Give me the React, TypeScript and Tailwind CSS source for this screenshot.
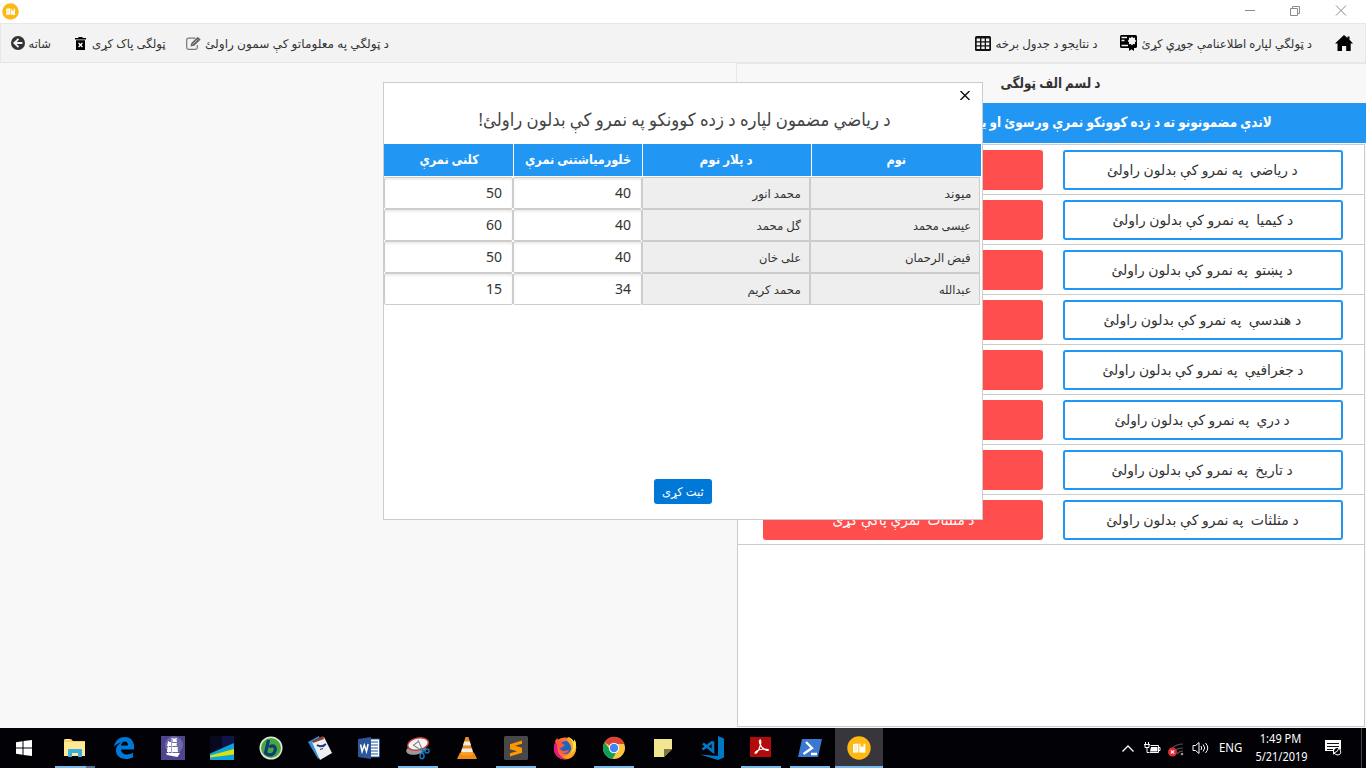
import React, { useLayoutEffect, useRef, useState } from "react";

/* Right-to-left line of text, condensed or widened to the given width. */
function Line({ text, w, className = "" }: { text: string; w: number; className?: string }) {
  const ref = useRef<HTMLSpanElement>(null);
  const [scale, setScale] = useState(1);
  useLayoutEffect(() => {
    if (ref.current) setScale(w / ref.current.offsetWidth);
  }, [w, text]);
  return (
    <span className="inline-flex shrink-0 justify-center" style={{ width: w }}>
      <span
        ref={ref}
        dir="rtl"
        className={"inline-block shrink-0 whitespace-pre " + className}
        style={{ transform: `scaleX(${scale})` }}
      >
        {text}
      </span>
    </span>
  );
}

const subjects: [string, number][] = [
  ["د ریاضي  په نمرو کې بدلون راولئ", 191],
  ["د کیمیا  په نمرو کې بدلون راولئ", 181],
  ["د پښتو  په نمرو کې بدلون راولئ", 181],
  ["د هندسې  په نمرو کې بدلون راولئ", 198],
  ["د جغرافیې  په نمرو کې بدلون راولئ", 201],
  ["د دري  په نمرو کې بدلون راولئ", 175],
  ["د تاریخ  په نمرو کې بدلون راولئ", 181],
  ["د مثلثات  په نمرو کې بدلون راولئ", 192],
];

const students: [string, number, string, number, number, number][] = [
  ["میوند", 27, "محمد انور", 48, 40, 50],
  ["عیسی محمد", 58, "گل محمد", 44, 40, 60],
  ["فیض الرحمان", 66, "علی خان", 42, 40, 50],
  ["عبدالله", 32, "محمد کریم", 53, 34, 15],
];

function AppLogo({ size }: { size: number }) {
  return (
    <svg width={size} height={size} viewBox="0 0 24 24">
      <circle cx="12" cy="12" r="11.7" fill="#fdb813" />
      <path d="M6 8 L11.400 7.400 V16.400 L6 16.800Z M12.200 8 L13.500 7.400 V11.500 L15 10 L16.500 11.500 V7.400 L18.300 8 V16.800 L12.200 16.400Z" fill="#fff" />
      <path d="M7.300 10h2.700M7.300 12h2.700M7.300 14h2.700" stroke="#fdb813" strokeWidth=".5" />
    </svg>
  );
}

function TitleBar() {
  return (
    <div className="flex h-[23px] items-center justify-between bg-white pl-[2px] pr-[19px]">
      <AppLogo size={17} />
      <svg width="103" height="13" viewBox="0 0 103 13" fill="none" stroke="#8a8a8a" strokeWidth="1">
        <path d="M1 5.500h10M46.500 3.500h7v7h-7zM48.500 3.500v-2h7v7h-2M92 .5l10 10M102 .5l-10 10" />
      </svg>
    </div>
  );
}

function Toolbar() {
  return (
    <div className="flex h-10 items-center justify-between border border-[#e7e7e7] bg-[#f3f3f3] pl-[10px] pr-[12px] text-[12px] text-[#333]">
      <div className="flex items-center">
        <svg width="14" height="14" viewBox="0 0 14 14">
          <circle cx="7" cy="7" r="7" fill="#333" />
          <path d="M7.500 2.800L3.300 7l4.200 4.200M3.600 7h7.800" fill="none" stroke="#f3f3f3" strokeWidth="1.900" />
        </svg>
        <span className="ml-[4px] flex pt-[2px]"><Line text="شاته" w={22} /></span>
        <svg className="ml-[24px]" width="11" height="13" viewBox="0 0 11 13">
          <path d="M0 1h3l.8-1h3.400L8 1h3v1.500H0zM1 3.300h9V13H1z" fill="#000" />
          <path d="M3.600 6l3.800 4M7.400 6l-3.800 4" stroke="#fff" strokeWidth="1.300" />
        </svg>
        <span className="ml-[6px] flex pt-[2px]"><Line text="ټولگی پاک کړی" w={74} /></span>
        <svg className="ml-[20px]" width="15" height="13" viewBox="0 0 15 13" fill="none" stroke="#777" strokeWidth="1.200">
          <path d="M9.500 1.200H2.500Q.7 1.200 .7 3v7.500q0 1.800 1.800 1.800H9.500q1.800 0 1.800-1.800V8" />
          <path d="M4.500 9.500l.8-3.500L11.700-.2l3 2.800L8.200 8.800z" fill="#666" stroke="none" />
          <path d="M6.500 7.500l5-5" stroke="#eee" strokeWidth=".6" />
        </svg>
        <span className="ml-[4px] flex pt-[2px]"><Line text="د ټولگي په معلوماتو کې سمون راولئ" w={184} /></span>
      </div>
      <div className="flex items-center">
        <svg width="16" height="15" viewBox="0 0 16 15">
          <rect width="16" height="15" rx="1.500" fill="#111" />
          <path d="M1.700 2.500h3.300v2.700H1.700zM6.400 2.500h3.300v2.700H6.400zM11 2.500h3.300v2.700H11zM1.700 6.500h3.300v2.700H1.700zM6.400 6.500h3.300v2.700H6.400zM11 6.500h3.300v2.700H11zM1.700 10.400h3.300v2.700H1.700zM6.400 10.400h3.300v2.700H6.400zM11 10.400h3.300v2.700H11z" fill="#f3f3f3" />
        </svg>
        <span className="ml-[5px] flex pt-[2px]"><Line text="د نتایجو د جدول برخه" w={102} /></span>
        <svg className="ml-[22px]" width="17" height="16" viewBox="0 0 17 16">
          <path d="M1.500 0h14Q17 0 17 1.500v10Q17 13 15.500 13H14v3l-2.500-1.800L9 16v-3H1.500Q0 13 0 11.500v-10Q0 0 1.500 0z" fill="#000" />
          <path d="M1.500 2.500h5.500M1.500 5.500h3M1.500 10.500H8" stroke="#f3f3f3" strokeWidth="1.300" />
          <path d="M12 1.600l1.200 1.300 1.900-.4-.2 2L16.300 6l-1.400 1.300.2 2-1.900-.3L12 10.400l-1.300-1.400-1.800.3.100-2L7.700 6 9 4.500l-.1-2 1.800.4z" fill="#f3f3f3" />
        </svg>
        <span className="ml-[5px] flex pt-[2px]"><Line text="د ټولگي لپاره اطلاعنامې جوړې کړئ" w={170} /></span>
        <svg className="ml-[23px]" width="18" height="16" viewBox="0 0 18 16">
          <path d="M9 0l3.500 3V1.500h2v3.200L18 8.500h-2.300V16h-4.500v-5H7v5H2.500V8.500H0z" fill="#000" />
        </svg>
      </div>
    </div>
  );
}

function SubjectPanel() {
  return (
    <div className="flex h-full w-[630px] flex-col border-t border-[#e7e7e7]">
      <div className="flex h-[39px] shrink-0 items-center justify-center border-l border-[#e7e7e7] bg-[#f8f8f8] pb-[2px] pr-[2px] text-[14px] font-bold text-[#333]">
        <Line text="د لسم الف ټولگی" w={100} />
      </div>
      <div className="ml-px flex h-10 shrink-0 items-center justify-end bg-[#2196f3] pb-[3px] pr-[94px] text-[14px] font-bold text-white">
        <Line text="لاندې مضمونونو ته د زده کوونکو نمرې ورسوئ او یا هم په نمرو کې بدلون راولئ" w={457} />
      </div>
      <div className="ml-px mr-px mt-px flex h-[583px] flex-col border border-[#ccc] bg-white">
        {subjects.map(([s, w]) => (
          <div key={s} className="flex h-[50px] shrink-0 items-center justify-between border-b border-[#ccc] pl-[25px] pr-[21px]">
            <div className="flex h-10 w-[280px] items-center justify-center rounded-[3px] bg-[#ff4e4e] text-[14px] text-white">
              <Line text={s.replace("په نمرو کې بدلون راولئ", "نمرې پاکې کړئ")} w={w - 50} />
            </div>
            <div className="flex h-10 w-[280px] items-center justify-center rounded-[3px] border-2 border-[#2196f3] pr-px text-[14px] text-[#333]">
              <Line text={s} w={w} />
            </div>
          </div>
        ))}
      </div>
    </div>
  );
}

function ScoreDialog() {
  return (
    <div className="absolute left-[383px] top-[82px] flex h-[438px] w-[600px] flex-col border border-[#ccc] bg-white text-[#333]">
      <div className="flex h-[24px] shrink-0 items-center justify-end pr-[12px]">
        <svg width="10" height="9" viewBox="0 0 10 9" stroke="#111" strokeWidth="1.400"><path d="M.5 0l9 9M9.500 0l-9 9" /></svg>
      </div>
      <div className="flex h-[37px] shrink-0 items-start justify-center pl-[3px] text-[18px] leading-[24px] text-[#444]">
        <Line text="د ریاضي مضمون لپاره د زده کوونکو په نمرو کې بدلون راولئ!" w={412} />
      </div>
      <div className="flex h-[33px] shrink-0 gap-px pb-px pr-px text-[13px] font-bold text-white [&>div]:flex [&>div]:items-center [&>div]:justify-center [&>div]:bg-[#2196f3]">
        <div className="w-[129px] pl-px"><Line text="کلنی نمرې" w={59} /></div>
        <div className="w-[128px]"><Line text="څلورمیاشتنی نمرې" w={106} /></div>
        <div className="w-[168px] pr-[2px]"><Line text="د پلار نوم" w={53} /></div>
        <div className="flex-1"><Line text="نوم" w={20} /></div>
      </div>
      {students.map(([name, nw, father, fw, mid, year]) => (
        <div key={name} className="flex h-8 shrink-0 text-[12px] [&>div]:flex [&>div]:items-center [&>div]:justify-end [&>div]:border [&>div]:border-[#ccc]">
          <div className="w-[129px] rounded-[2px] pb-px pr-[10px] text-[14px] shadow-[inset_0_2px_2px_#eee]">{year}</div>
          <div className="w-[129px] rounded-[2px] pb-px pr-[10px] text-[14px] shadow-[inset_0_2px_2px_#eee]">{mid}</div>
          <div className="w-[168px] bg-[#eee] pr-[8px] pt-[2px]"><Line text={father} w={fw} /></div>
          <div className="w-[170px] bg-[#eee] pr-[8px] pt-[2px]"><Line text={name} w={nw} /></div>
        </div>
      ))}
      <div className="mb-[15px] mt-auto flex h-[25px] w-[58px] items-center justify-center self-center rounded-[3px] bg-[#0078d7] text-[12px] text-white">
        <Line text="ثبت کړی" w={42} />
      </div>
    </div>
  );
}

const S = ({ children }: { children: React.ReactNode }) => (
  <svg width="24" height="24" viewBox="0 0 24 24">{children}</svg>
);

const tasks: { icon: React.ReactNode; open?: boolean; active?: boolean; multi?: boolean }[] = [
  { open: true, multi: true, icon: <S><path d="M1 4q0-1 1-1h6l2 2h12v15H1z" fill="#f5cd62" /><path d="M1 6h21v14H1z" fill="#ffe793" /><path d="M3 3.600h3" stroke="#fff" /><path d="M5 21v-7q0-1 1-1h12q1 0 1 1v7h-4v-4H9v4z" fill="#3aaee0" /></S> },
  { icon: <S><path d="M2 11C3 4 8 1 13 1c6 0 9 5 9 9v3.500H9c.2 3.500 3 5 6 5 2.300 0 4.300-.7 6-1.700v4.400C19 22.400 16.500 23 14 23 8.500 23 4 20 4 14.500c0-4 2.600-6.700 5.500-8C6.500 6.800 3.800 8.500 2 11zm7-1.500h7C16 7 14.700 5.500 12.800 5.500 10.700 5.500 9.300 7.300 9 9.500z" fill="#0078d7" /></S> },
  { icon: <S><rect width="24" height="24" fill="#4d468f" /><circle cx="13" cy="9" r="9" fill="#8780b8" opacity=".6" /><path d="M11 2q2 1 5 0-1 2 0 4h-4q0-2-1-4zM7 6h3v4H6zM11 7h5q-1 2 0 3h-5zM6.500 11H10v5H6zM11 11h6q-1 2 0 5h-6zM5 17h14l-2.500 4L6 19z" fill="#fff" /><path d="M11 2v16M7.500 5v12" stroke="#fff" strokeWidth=".7" /></S> },
  { icon: <S><rect width="24" height="24" fill="#080920" /><path d="M12 0h12v9L12 12z" fill="#111448" /><path d="M0 17.500L24 7v17H0z" fill="#08a6dc" /><path d="M0 19.500l24-6.500v5.500L0 21.500z" fill="#dce10c" /></S> },
  { icon: <S><circle cx="12" cy="12" r="11.500" fill="#e8ead8" /><circle cx="12" cy="12" r="10" fill="#43a83f" /><path d="M9.500 4L6.500 17q5 4 8.500 0 3-5-.5-7-3-.5-4 1.500" fill="none" stroke="#113b76" strokeWidth="3.200" /></S> },
  { icon: <S><path d="M0 6L11 0l5 17-6 6z" fill="#3391e2" /><path d="M4 6L16 1l8 16-12 7z" fill="#eceef0" /><path d="M4 5L15 0l1 3L5 7z" fill="#8b3b2b" /><path d="M9 9q4 3 9-1" stroke="#24357b" fill="none" strokeWidth="1.800" /><path d="M12 13.500l3-1M15 11l1.500-1" stroke="#24357b" /></S> },
  { icon: <S><path d="M12 3h10.500v18H12z" fill="#fff" stroke="#2b579a" /><path d="M14 6h7M14 9h7M14 12h7M14 15h7M14 18h7" stroke="#2b579a" strokeWidth="1.200" /><path d="M1 3l13-2v22L1 21z" fill="#2b579a" /><path d="M3.500 8.500l1.600 7 2.200-6.500 2.200 6.500 1.600-7.500" fill="none" stroke="#fff" strokeWidth="1.500" /></S> },
  { open: true, icon: <S><ellipse cx="10" cy="13.500" rx="10" ry="5" fill="#999" transform="rotate(-12 10 13.500)" /><ellipse cx="12" cy="8" rx="10.500" ry="6" fill="#f4f4f4" stroke="#c63b3b" strokeWidth="1.400" transform="rotate(-12 12 8)" /><path d="M12 4l4 9M7 9l8 5M13 5L7 9.500" stroke="#888" strokeWidth="1.100" /><circle cx="21" cy="15" r="2" fill="none" stroke="#1979b9" strokeWidth="1.500" /><path d="M14 13l6 2M16 13l1 5" stroke="#1979b9" strokeWidth="1.500" /><ellipse cx="16" cy="20" rx="2" ry="2.700" fill="none" stroke="#1979b9" strokeWidth="1.500" /></S> },
  { icon: <S><path d="M10.500 1h3l5 17h-13z" fill="#f28b12" /><path d="M9.200 5.500h5.600l1.200 4H8zM7 12.500h10l1 4H6z" fill="#eee" /><path d="M5 16.500h14l3 6.500H2z" fill="#f28b12" /><path d="M6 15.500q6 4 12 0v3q-6 2-12 0z" fill="#ff9e26" /></S> },
  { open: true, icon: <S><rect width="24" height="24" rx="1.500" fill="#484848" /><path d="M18 4.500L6 8.200v5l7 2-7 2v3.300l12-3.700v-5l-7-2 7-2z" fill="#ff9800" /></S> },
  { icon: <S><circle cx="12" cy="12.500" r="11" fill="#ff7139" /><path d="M3 5C0 9 0 16 3 19q4 5 10 4-6-2-8-7-1-5 0-7z" fill="#e31587" /><circle cx="12.500" cy="11.500" r="6.500" fill="#1d64c4" /><path d="M2 5q1-1 2-3l2 3 3-1-1 3 4 2-2 2-3 1q1 3 4 3l5-1q-2 4-7 3-5-2-5-8z" fill="#ff5a36" /><path d="M15 1q-2 3 1 6 4 4 1 9-3 5-8 5 7 4 12-2 4-6 1-13l-1 2q-1-5-6-7z" fill="#ffa51e" /><path d="M15 1q5 3 5 9 0 5-3 8 6-3 6-9 0-4-2-6v3q-2-4-6-5z" fill="#ffe14a" /></S> },
  { open: true, icon: <S><circle cx="12" cy="12" r="11" fill="#fbc640" /><path d="M12 12L2.500 6.500A11 11 0 0 1 22.500 8H12z" fill="#db4437" /><path d="M2.500 6.500A11 11 0 0 0 10.500 23L15.500 14H12L7.500 13z" fill="#0f9d58" /><circle cx="12" cy="12" r="5.200" fill="#fff" /><circle cx="12" cy="12" r="4.200" fill="#4285f4" /></S> },
  { icon: <S><path d="M3 3h18v10l-8 8H3z" fill="#f2e690" /><path d="M13 13h8l-8 8z" fill="#7e7543" /></S> },
  { icon: <S><path d="M18 0l6 2.500v19L18 24 0 18.500l18 1.500z" fill="#0078c8" /><path d="M13 5.500v10L3 7.500M2.500 13.500L13 5.500" fill="none" stroke="#0078c8" strokeWidth="2.600" /></S> },
  { open: true, icon: <S><rect x="1" y="1" width="21" height="20" fill="#b30b0b" /><path d="M11 4q-1.500 1 .5 5t6.500 5.500q2 0 1-1-3-1-7.500 0t-5.500 3.500q1.500 1 4-4t1.500-8.500q0-.8-.5-.5" fill="none" stroke="#fff" strokeWidth="1.200" /></S> },
  { open: true, icon: <S><path d="M4 3h20l-4 18H0z" fill="#3b78cf" /><path d="M8 6l6 6-8.500 6M13 18h6" fill="none" stroke="#fff" strokeWidth="2.300" /></S> },
  { open: true, active: true, icon: <AppLogo size={24} /> },
];

function Taskbar() {
  return (
    <div className="flex h-10 shrink-0 bg-[#020106] text-[12px] leading-[18px] text-white">
      <div className="flex w-[51px] items-center pl-4">
        <svg width="16" height="16" viewBox="0 0 16 16" fill="#fff"><path d="M0 2.200L6.500 1.300V7.500H0zM7.500 1.100L16 0v7.500H7.500zM0 8.500h6.500v6.200L0 13.800zM7.500 8.500H16V16l-8.500-1.100z" /></svg>
      </div>
      <div className="flex gap-px">
        {tasks.map((t, i) => (
          <div key={i} className={"flex w-12 flex-col items-center justify-between pt-2 " + (t.active ? "bg-[#38363c]" : "")}>
            {t.icon}
            <div className={"flex h-[2px] justify-end " + (t.active ? "w-12 bg-[#76b9ed]" : t.open ? "w-10 bg-[#76b9ed]" : "w-10")}>
              {t.multi && <span className="h-[2px] w-[9px] bg-[#4b7597]" />}
            </div>
          </div>
        ))}
      </div>
      <div className="ml-auto flex items-center">
        <svg width="12" height="7" viewBox="0 0 12 7" fill="none" stroke="#fff" strokeWidth="1.300"><path d="M.5 6.500L6 1l5.500 5.500" /></svg>
        <svg className="ml-[10px]" width="17" height="13" viewBox="0 0 17 13" fill="none" stroke="#fff"><path d="M6.500 3.500h8v7h-9M15 5.500h1v3h-1" /><path d="M7 5h6.500v4.500H6z" fill="#fff" stroke="none" /><path d="M1.500 0v2M4.500 0v2M0 2.500h6M1 3v2.500h4V3M3 6v4.500h2" /></svg>
        <svg className="mb-[-4px] ml-[7px]" width="16" height="14" viewBox="0 0 16 14" fill="none"><path d="M3 6Q8 1 15 1M6 9q3-4 9-4M9 11q2-3 6-3" stroke="#55545a" strokeWidth="1.200" /><circle cx="14" cy="11" r="1.300" fill="#999" /><circle cx="4.500" cy="9" r="4.500" fill="#e22b31" /><path d="M2.800 7.300l3.400 3.400M6.200 7.300l-3.400 3.400" stroke="#fff" strokeWidth="1.200" /></svg>
        <svg className="ml-[8px]" width="17" height="14" viewBox="0 0 17 14" fill="none" stroke="#fff"><path d="M1 4.500h2.500L7 1.500v11L3.500 9.500H1zM9 5q1.500 2 0 4M11.200 3.500q3 3.500 0 7M13.500 2q4.500 5 0 10" /></svg>
        <div className="ml-[10px] w-[24px]"><span className="inline-block origin-left scale-x-[.95] font-['Noto_Sans']">ENG</span></div>
        <div className="ml-[8px] flex w-[60px] flex-col items-center whitespace-nowrap pb-px font-['Noto_Sans'] text-[12px]">
          <span className="scale-x-[.92]">1:49 PM</span>
          <span className="scale-x-[.91]">5/21/2019</span>
        </div>
        <svg className="ml-[14px]" width="17" height="16" viewBox="0 0 17 16"><path d="M0 0h16v11h-5l-3 4v-4H0z" fill="#fff" /><path d="M2 3.500h12M2 6.500h12M2 9.500h6" stroke="#111" /><circle cx="12.500" cy="11.500" r="3.500" fill="#020106" /><path d="M9 13q4-1 5-5 4 6-1 7-2 0-4-2z" fill="none" stroke="#fff" /></svg>
        <div className="ml-[19px] h-10 w-[5px] border-l border-[#444]" />
      </div>
    </div>
  );
}

export default function App() {
  return (
    <div className="relative flex h-[768px] w-[1366px] flex-col overflow-hidden bg-[#f8f8f8] font-['Noto_Sans','DejaVu_Sans',sans-serif]">
      <TitleBar />
      <Toolbar />
      <div className="flex min-h-0 flex-1 justify-end"><SubjectPanel /></div>
      <ScoreDialog />
      <Taskbar />
    </div>
  );
}
